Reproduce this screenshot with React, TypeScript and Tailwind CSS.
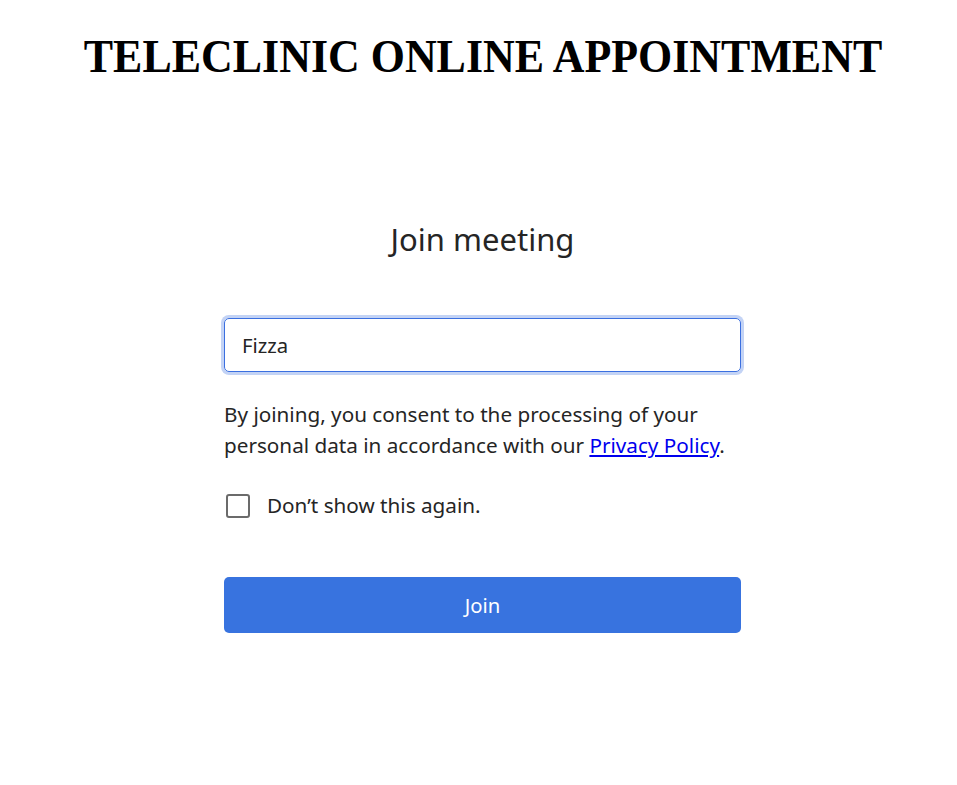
import { useState } from 'react';

export default function App() {
  const [name, setName] = useState('Fizza');
  const [hide, setHide] = useState(false);

  return (
    <div className="min-h-screen bg-white pl-[8px] font-['Noto_Sans',sans-serif] text-[#252525]">
      {/* Page title */}
      <h1 className="pt-[29px] text-center font-['Liberation_Serif',serif] text-[47px] font-bold leading-[54px] text-black">
        <span className="inline-block scale-x-[0.935]">TELECLINIC ONLINE APPOINTMENT</span>
      </h1>

      {/* Join form */}
      <div className="mx-auto mt-[135px] w-[517px]">
        <h2 className="text-center text-[31px] leading-[42px] text-[#252525]">Join meeting</h2>

        <input
          autoFocus
          value={name}
          onChange={(e) => setName(e.target.value)}
          className="mt-[58px] block h-[54px] w-full rounded-[5px] border border-[#3b6fe0] px-[17px] text-[20.3px] text-[#252525] caret-black outline-none ring-[3px] ring-[#c3d3f5]"
        />

        <p className="mt-[27px] text-[20.7px] leading-[31px]">
          By joining, you consent to the processing of your personal data in accordance with our{' '}
          <a href="#" className="text-[#0000ee] underline">
            Privacy Policy
          </a>
          .
        </p>

        <label className="mt-[29px] flex items-center gap-[17px] text-[20.7px] leading-[31px]">
          <input type="checkbox" checked={hide} onChange={() => setHide(!hide)} className="sr-only" />
          <span className="ml-[2px] h-[24px] w-[24px] rounded-[3px] border-2 border-[#6b6b6b]" />
          <span>Don’t show this again.</span>
        </label>

        <button className="mt-[56px] h-[56px] w-full rounded-[5px] bg-[#3873df] text-[20.3px] text-white">
          Join
        </button>
      </div>
    </div>
  );
}
